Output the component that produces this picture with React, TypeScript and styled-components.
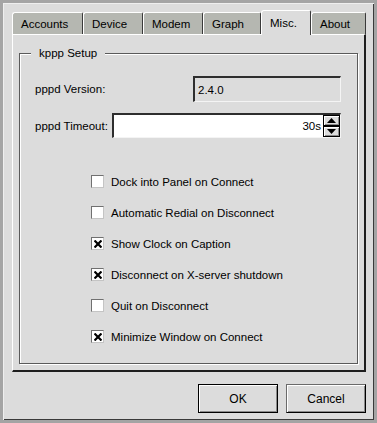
import React from "react"
import styled, { createGlobalStyle, css } from "styled-components"

const GlobalStyle = createGlobalStyle`
  html, body {
    margin: 0;
    padding: 0;
    background: #dcdcdc;
  }
  body {
    font-family: "Liberation Sans", Arial, sans-serif;
    font-size: 11.5px;
    color: #000;
  }
  * {
    box-sizing: border-box;
  }
`

const tabs = [
  { label: "Accounts", width: 71 },
  { label: "Device", width: 60 },
  { label: "Modem", width: 60 },
  { label: "Graph", width: 58 },
  { label: "Misc.", width: 50, active: true },
  { label: "About", width: 55 },
]

const options = [
  { label: "Dock into Panel on Connect", checked: false },
  { label: "Automatic Redial on Disconnect", checked: false },
  { label: "Show Clock on Caption", checked: true },
  { label: "Disconnect on X-server shutdown", checked: true },
  { label: "Quit on Disconnect", checked: false },
  { label: "Minimize Window on Connect", checked: true },
]

const App: React.FC = () => {
  return (
    <>
      <GlobalStyle />
      <Window>
        <TabBar>
          {tabs.map((t) => (
            <Tab key={t.label} $width={t.width} $active={t.active}>
              {t.label}
            </Tab>
          ))}
        </TabBar>
        <TabPanel>
          <GroupBox>
            <GroupTitle>kppp Setup</GroupTitle>
            <FieldRow>
              <FieldLabel>pppd Version:</FieldLabel>
              <ReadOnlyField>2.4.0</ReadOnlyField>
            </FieldRow>
            <FieldRow>
              <FieldLabel $tight>pppd Timeout:</FieldLabel>
              <SpinBox>
                <SpinValue>30s</SpinValue>
                <SpinButtons>
                  <SpinButton>
                    <svg width="9" height="5" viewBox="0 0 9 5">
                      <path d="M0 5 L4.5 0 L9 5 Z" fill="#000" />
                    </svg>
                  </SpinButton>
                  <SpinButton>
                    <svg width="9" height="5" viewBox="0 0 9 5">
                      <path d="M0 0 L9 0 L4.5 5 Z" fill="#000" />
                    </svg>
                  </SpinButton>
                </SpinButtons>
              </SpinBox>
            </FieldRow>
            <OptionList>
              {options.map((o) => (
                <OptionRow key={o.label}>
                  <CheckBox>
                    {o.checked && (
                      <svg width="8" height="8" viewBox="0 0 8 8">
                        <path
                          d="M0.5 0.5 L7.5 7.5 M7.5 0.5 L0.5 7.5"
                          stroke="#000"
                          strokeWidth="2.2"
                        />
                      </svg>
                    )}
                  </CheckBox>
                  <OptionText>{o.label}</OptionText>
                </OptionRow>
              ))}
            </OptionList>
          </GroupBox>
        </TabPanel>
        <ButtonRow>
          <PushButton $default>OK</PushButton>
          <PushButton>Cancel</PushButton>
        </ButtonRow>
      </Window>
    </>
  )
}

const Window = styled.div`
  display: flex;
  flex-direction: column;

  width: 377px;
  height: 423px;
  padding: 7px 8px 7px 9px;

  background: #dcdcdc;
  border: 3px solid #a4a4a4;
  box-shadow: inset 1px 1px 0 #eeeeee, inset -1px -1px 0 #3a3a3a;
`

const TabBar = styled.div`
  display: flex;
  flex-direction: row;
  align-items: flex-end;

  height: 24px;
`

const Tab = styled.div<{ $width: number; $active?: boolean }>`
  position: relative;
  display: flex;
  align-items: center;

  width: ${(p) => p.$width}px;
  height: 22px;
  padding: 1px 0 0 8px;

  background: #b5b7b1;
  border-top: 1px solid #ffffff;
  border-left: 1px solid #ffffff;
  border-right: 1px solid #3a3a3a;
  border-top-left-radius: 3px;
  border-top-right-radius: 2px;
  white-space: nowrap;

  ${(p) =>
    p.$active &&
    css`
      height: 25px;
      margin-bottom: -1px;
      padding-bottom: 2px;
      background: #dcdcdc;
      z-index: 1;
    `}
`

const TabPanel = styled.div`
  display: flex;

  height: 338px;
  padding: 12px 6px 6px 6px;

  border-top: 1px solid #ffffff;
  border-left: 1px solid #ffffff;
  border-right: 2px solid #1e1e1e;
  border-bottom: 2px solid #1e1e1e;
`

const GroupBox = styled.fieldset`
  display: flex;
  flex-direction: column;

  flex: 1;
  min-width: 0;
  margin: 0;
  padding: 16px 16px 0 15px;

  border: 1px solid #5a5a5a;
  box-shadow: 1px 1px 0 #ffffff, inset 1px 1px 0 #ffffff;
`

const GroupTitle = styled.legend`
  margin-left: -4px;
  padding: 0 8px;
  line-height: 13px;

  background: #dcdcdc;
`

const FieldRow = styled.div`
  display: flex;
  flex-direction: row;
  align-items: center;

  margin-bottom: 11px;
`

const FieldLabel = styled.div<{ $tight?: boolean }>`
  flex: ${(p) => (p.$tight ? "0 0 auto" : "1")};
  padding-right: ${(p) => (p.$tight ? "4px" : "0")};
  white-space: nowrap;
`

const sunken = css`
  border-style: solid;
  border-width: 2px 1px 1px 2px;
  border-color: #2e2e2e #f4f4f4 #f4f4f4 #2e2e2e;
`

const ReadOnlyField = styled.div`
  ${sunken};
  display: flex;
  align-items: center;

  width: 148px;
  height: 26px;
  padding-left: 3px;

  background: #dcdcdc;
`

const SpinBox = styled.div`
  ${sunken};
  display: flex;
  flex-direction: row;
  align-items: center;

  flex: 1;
  height: 25px;

  background: #ffffff;
`

const SpinValue = styled.div`
  flex: 1;
  padding-right: 2px;
  text-align: right;
`

const SpinButtons = styled.div`
  display: flex;
  flex-direction: column;

  width: 17px;
  height: 22px;
`

const SpinButton = styled.div`
  display: flex;
  align-items: center;
  justify-content: center;

  height: 11px;

  background: #dcdcdc;
  border: 1px solid #000000;
  box-shadow: inset 1px 1px 0 #ffffff, inset -1px -1px 0 #8a8a8a;
`

const OptionList = styled.div`
  display: flex;
  flex-direction: column;

  margin-top: 17px;
  padding-left: 56px;
`

const OptionRow = styled.div`
  display: flex;
  flex-direction: row;
  align-items: center;
  gap: 7px;

  height: 31px;
`

const CheckBox = styled.div`
  display: flex;
  align-items: center;
  justify-content: center;

  width: 13px;
  height: 13px;

  background: #ffffff;
  border: 1px solid;
  border-color: #707070 #c4c4c4 #c4c4c4 #707070;
`

const OptionText = styled.div`
  white-space: nowrap;
`

const ButtonRow = styled.div`
  display: flex;
  flex-direction: row;
  justify-content: flex-end;
  gap: 8px;

  margin-top: 12px;
`

const PushButton = styled.div<{ $default?: boolean }>`
  display: flex;
  align-items: center;
  justify-content: center;

  width: 80px;
  height: 29px;

  background: #dcdcdc;
  border: 1px solid;
  border-color: ${(p) =>
    p.$default ? "#000000" : "#6a6a6a #000000 #000000 #6a6a6a"};
  box-shadow: inset 1px 1px 0 #ffffff, inset -1px -1px 0 #8a8a8a;
  font-size: 12px;
  user-select: none;
  cursor: pointer;
`

export default App
